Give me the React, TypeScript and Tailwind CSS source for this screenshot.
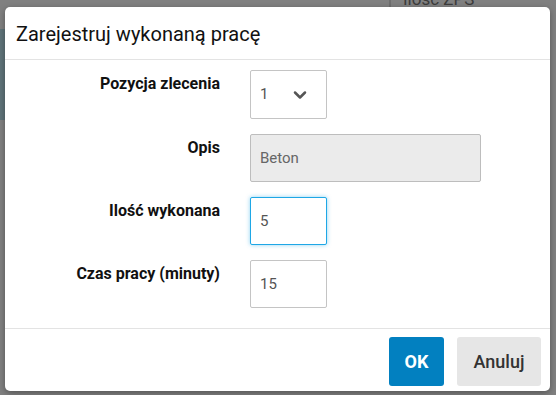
import { ChevronDown } from "lucide-react";

const rows = [
  { label: "Pozycja zlecenia", kind: "select", value: "1" },
  { label: "Opis", kind: "readonly", value: "Beton" },
  { label: "Ilość wykonana", kind: "focus", value: "5" },
  { label: "Czas pracy (minuty)", kind: "input", value: "15" },
];

const Field = ({ kind, value }: { kind: string; value: string }) => {
  if (kind === "select") {
    return (
      <div className="w-[77px] h-[49px] border border-[#c4c4c4] rounded-[2px] bg-white flex items-center justify-between pl-[9px] pr-[16px] text-[15px] text-[#555]">
        <span>{value}</span>
        <ChevronDown size={20} strokeWidth={3} className="text-[#555]" />
      </div>
    );
  }
  if (kind === "readonly") {
    return (
      <div className="w-[231px] h-[48px] border border-[#bdbdbd] rounded-[2px] bg-[#ebebeb] flex items-center pl-[9px] text-[15px] text-[#666]">
        {value}
      </div>
    );
  }
  return (
    <div
      className={
        kind === "focus"
          ? "w-[77px] h-[48px] border border-[#1ea7e6] rounded-[2px] bg-white flex items-center pl-[9px] text-[15px] text-[#555] shadow-[0_0_4px_rgba(30,167,230,0.5)]"
          : "w-[77px] h-[48px] border border-[#c4c4c4] rounded-[2px] bg-white flex items-center pl-[9px] text-[15px] text-[#555]"
      }
    >
      {value}
    </div>
  );
};

export default function App() {
  return (
    <div className="relative w-[556px] h-[395px] overflow-hidden bg-[#808080] font-['Roboto',sans-serif]">
      {/* page behind the overlay */}
      <div className="absolute left-0 top-[29px] w-[8px] h-[91px] bg-[#5f7479]" />
      <div className="absolute left-[389px] top-0 w-[2px] h-[8px] bg-[#6e6e6e]" />
      <div className="absolute left-[403px] top-[-11px] text-[17px] leading-5 text-[#3c3c3c]">Ilość ZPS</div>

      <div className="absolute left-[5px] top-[7px] w-[545px] h-[384px] bg-white rounded-[5px] shadow-[0_2px_6px_rgba(0,0,0,0.35)] flex flex-col">
        <div className="h-[53px] border-b border-[#e3e3e3] flex items-center px-[11px]">
          <h2 className="text-[20px] text-[#111] leading-none pt-[2px]">Zarejestruj wykonaną pracę</h2>
        </div>

        <div className="flex flex-col gap-[15px] pt-[10px] pb-[20px]">
          {rows.map((r) => (
            <div key={r.label} className="flex items-start gap-[30px]">
              <div className="w-[215px] text-right text-[16px] font-bold text-[#111] leading-5 pt-[4px]">
                {r.label}
              </div>
              <Field kind={r.kind} value={r.value} />
            </div>
          ))}
        </div>

        <div className="border-t border-[#e3e3e3] flex justify-end gap-[13px] pt-[8px] pr-[9px]">
          <button className="w-[55px] h-[49px] rounded-[3px] bg-[#0280c0] text-white text-[18px] font-bold">
            OK
          </button>
          <button className="w-[84px] h-[49px] rounded-[3px] bg-[#e6e6e6] text-[#333] text-[18px] font-medium">
            Anuluj
          </button>
        </div>
      </div>
    </div>
  );
}
